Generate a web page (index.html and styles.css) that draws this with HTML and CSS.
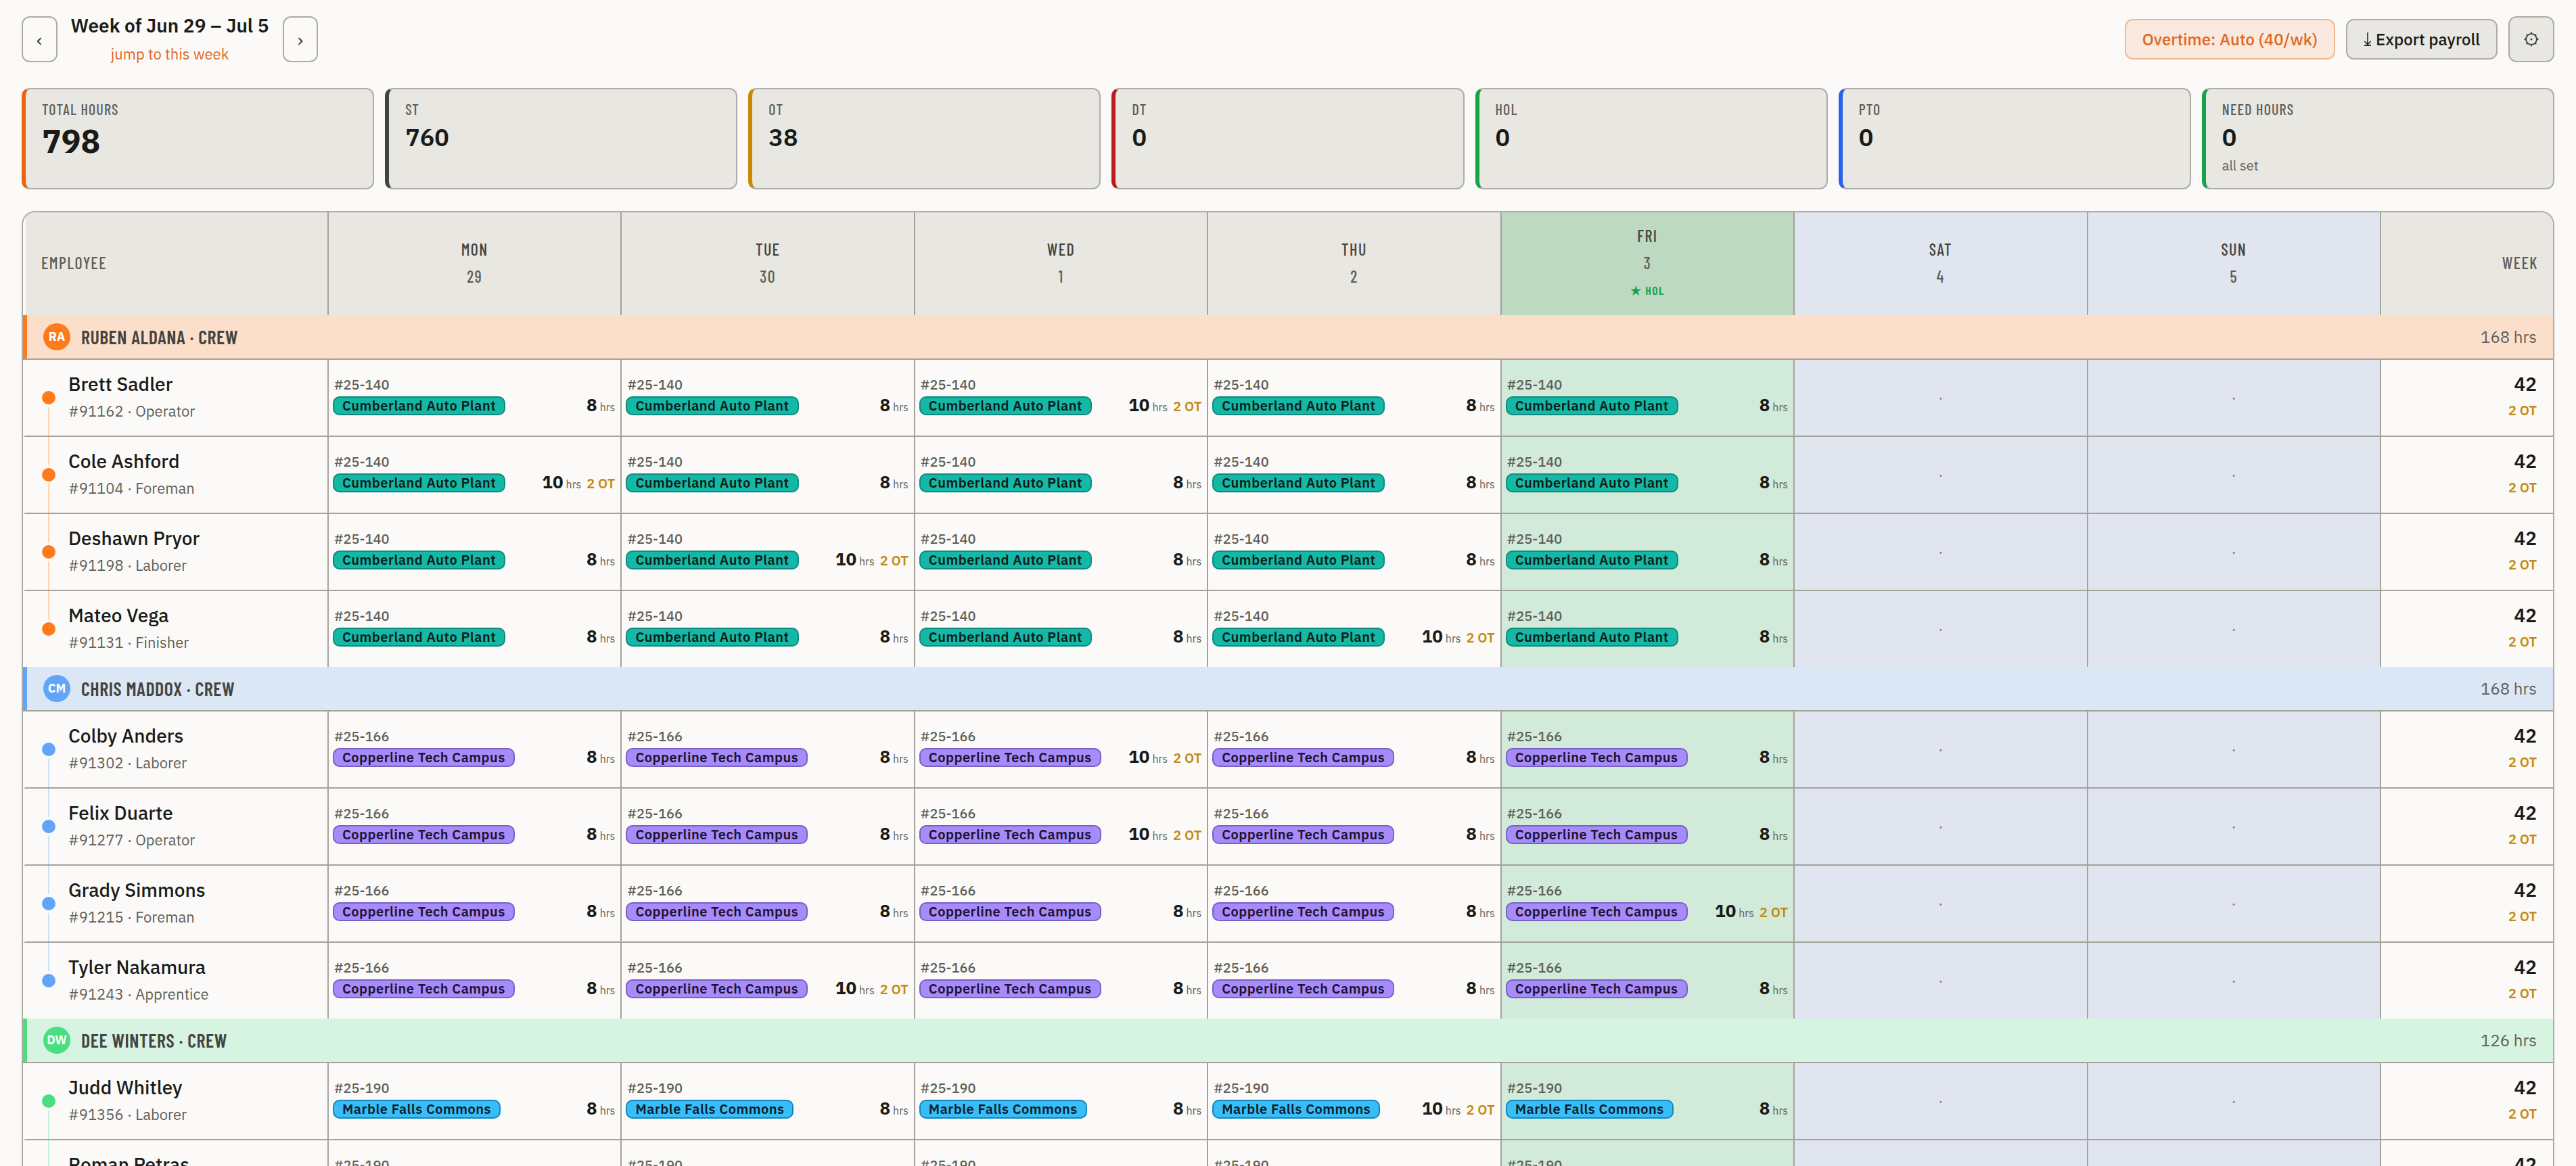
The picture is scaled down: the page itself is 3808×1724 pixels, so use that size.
FILE: index.html
```html
<!DOCTYPE html>
<html lang="en">
<head>
<meta charset="utf-8">
<meta name="viewport" content="width=device-width, initial-scale=1">
<title>Time sheet – Week of Jun 29 – Jul 5</title>
<link rel="stylesheet" href="styles.css">
</head>
<body>
<header class="topbar">
  <div class="week-nav">
    <button class="nav-btn" type="button" aria-label="Previous week">‹</button>
    <div class="week-title">
      <h1>Week of Jun 29 – Jul 5</h1>
      <a href="#">jump to this week</a>
    </div>
    <button class="nav-btn" type="button" aria-label="Next week">›</button>
  </div>
  <div class="actions">
    <button class="btn btn-accent" type="button">Overtime: Auto (40/wk)</button>
    <button class="btn" type="button">
      <svg viewBox="0 0 12 20" width="12" height="20" fill="none" stroke="currentColor" stroke-width="1.500" aria-hidden="true">
        <path d="M6 0v18M1.500 13 6 18l4.500-5M1 19.200h10"/>
      </svg>
      Export payroll
    </button>
    <button class="btn btn-icon" type="button" aria-label="Settings">
      <svg viewBox="0 0 24 24" width="24" height="24" fill="none" stroke="currentColor" stroke-width="2" aria-hidden="true">
        <circle cx="12" cy="12" r="8"/>
        <circle cx="12" cy="12" r="1.500" fill="currentColor" stroke="none"/>
        <path d="M12 4V1.500M12 20v2.500M4 12H1.500M20 12h2.500M6.300 6.300 4.800 4.800M17.700 6.300l1.500-1.500M6.300 17.700l-1.500 1.500M17.700 17.700l1.500 1.500"/>
      </svg>
    </button>
  </div>
</header>

<main>
  <section class="stats" aria-label="Weekly totals">
    <div class="stat stat-total"><span class="stat-label">Total hours</span><strong class="stat-value">798</strong></div>
    <div class="stat stat-st"><span class="stat-label">ST</span><strong class="stat-value">760</strong></div>
    <div class="stat stat-ot"><span class="stat-label">OT</span><strong class="stat-value">38</strong></div>
    <div class="stat stat-dt"><span class="stat-label">DT</span><strong class="stat-value">0</strong></div>
    <div class="stat stat-hol"><span class="stat-label">HOL</span><strong class="stat-value">0</strong></div>
    <div class="stat stat-pto"><span class="stat-label">PTO</span><strong class="stat-value">0</strong></div>
    <div class="stat stat-need"><span class="stat-label">Need hours</span><strong class="stat-value">0</strong><span class="stat-note">all set</span></div>
  </section>

  <div class="sheet">
    <table>
      <colgroup><col class="col-employee"><col><col><col><col><col><col><col><col class="col-week"></colgroup>
      <thead>
        <tr>
          <th class="employee" scope="col">Employee</th>
          <th scope="col"><span class="dow">Mon</span><span>29</span></th>
          <th scope="col"><span class="dow">Tue</span><span>30</span></th>
          <th scope="col"><span class="dow">Wed</span><span>1</span></th>
          <th scope="col"><span class="dow">Thu</span><span>2</span></th>
          <th scope="col" class="holiday"><span class="dow">Fri</span><span>3</span><span class="hol-tag">★ HOL</span></th>
          <th scope="col" class="weekend"><span class="dow">Sat</span><span>4</span></th>
          <th scope="col" class="weekend"><span class="dow">Sun</span><span>5</span></th>
          <th scope="col" class="week">Week</th>
        </tr>
      </thead>
    </table>
  </div>
</main>
<script src="sheet.js"></script>
</body>
</html>
```
FILE: sheet.js
```js
// Crews with their job; the last number of a person is the weekday with a 10-hour shift.
const crews = [
  { key: "orange", initials: "RA", lead: "Ruben Aldana", total: 168, job: "#25-140", site: "Cumberland Auto Plant", tone: "teal",
    people: [["Brett Sadler", "#91162 · Operator", 2], ["Cole Ashford", "#91104 · Foreman", 0], ["Deshawn Pryor", "#91198 · Laborer", 1], ["Mateo Vega", "#91131 · Finisher", 3]] },
  { key: "blue", initials: "CM", lead: "Chris Maddox", total: 168, job: "#25-166", site: "Copperline Tech Campus", tone: "violet",
    people: [["Colby Anders", "#91302 · Laborer", 2], ["Felix Duarte", "#91277 · Operator", 2], ["Grady Simmons", "#91215 · Foreman", 4], ["Tyler Nakamura", "#91243 · Apprentice", 1]] },
  { key: "green", initials: "DW", lead: "Dee Winters", total: 126, job: "#25-190", site: "Marble Falls Commons", tone: "sky",
    people: [["Judd Whitley", "#91356 · Laborer", 3], ["Roman Petras", "#91340 · Operator", 1]] }
];

const dayCell = (crew, day, long) => {
  const over = day === long;
  return `<td class="day${day === 4 ? " holiday" : ""}">
    <span class="job">${crew.job}</span>
    <div class="entry"><span class="site site-${crew.tone}">${crew.site}</span>
    <span class="hours"><b>${over ? 10 : 8}</b><small>hrs</small>${over ? '<em class="ot">2 OT</em>' : ""}</span></div></td>`;
};

const personRow = (crew, [name, info, long]) => `<tr>
  <th class="employee" scope="row"><div class="person"><span class="name">${name}</span><span class="info">${info}</span></div></th>
  ${[0, 1, 2, 3, 4].map(day => dayCell(crew, day, long)).join("")}
  <td class="weekend">·</td><td class="weekend">·</td>
  <td class="week"><span class="sum">42</span><span class="ot">2 OT</span></td></tr>`;

const table = document.querySelector(".sheet table");
for (const crew of crews) {
  const body = document.createElement("tbody");
  body.className = `crew crew-${crew.key}`;
  body.innerHTML = `<tr class="crew-head"><th colspan="9" scope="rowgroup"><div class="crew-bar">
    <span class="avatar">${crew.initials}</span><span class="crew-name">${crew.lead} · Crew</span><span class="crew-total">${crew.total} hrs</span>
    </div></th></tr>` + crew.people.map(p => personRow(crew, p)).join("");
  table.append(body);
}
```
FILE: styles.css
```css
:root {
  --bg: #fbfaf8;
  --panel: #e8e7e2;
  --line: #a3a29b;
  --edge: #adaca7;
  --ink: #1a1b19;
  --ink-2: #44443f;
  --muted: #5f5e57;
  --accent: #e0661c;
  --amber: #c58a11;
  --green: #16a34a;
  --sans: "IBM Plex Sans", "Noto Sans", sans-serif;
  --cond: "Barlow Condensed", "Roboto Condensed", sans-serif;
}

* { box-sizing: border-box; }

body {
  margin: 0;
  padding: 16px 32px 32px;
  background: var(--bg);
  color: var(--ink);
  font-family: var(--sans);
}

button { font: inherit; color: inherit; cursor: pointer; }

/* Top bar */
.topbar,
.week-nav,
.actions { display: flex; align-items: center; }

.topbar { justify-content: space-between; margin-bottom: 30px; }
.week-nav { gap: 20px; }
.actions { gap: 16px; }

.week-title { text-align: center; }

.week-title h1 {
  margin: 0;
  font-size: 28px;
  font-weight: 600;
  line-height: 44px;
}

.week-title a {
  display: block;
  color: var(--accent);
  font-size: 22px;
  line-height: 40px;
  text-decoration: none;
}

.nav-btn {
  height: 68px;
  padding: 0 20px;
  border: 2px solid var(--edge);
  border-radius: 12px;
  background: transparent;
  color: var(--ink-2);
  font-size: 28px;
}

.btn {
  display: flex;
  align-items: center;
  justify-content: center;
  gap: 6px;
  height: 60px;
  padding: 0 24px;
  border: 2px solid var(--edge);
  border-radius: 12px;
  background: var(--panel);
  font-size: 24px;
  font-weight: 500;
}

.btn-accent {
  border-color: #f1b78f;
  background: #fae9de;
  color: var(--accent);
}

.btn-icon {
  width: 68px;
  height: 68px;
  padding: 0;
  color: var(--ink-2);
}

/* Totals */
.stats {
  display: grid;
  grid-template-columns: repeat(7, 1fr);
  gap: 16px;
  margin-bottom: 32px;
}

.stat {
  display: flex;
  flex-direction: column;
  padding: 20px 24px 18px;
  border: 2px solid var(--edge);
  border-left: 6px solid var(--tone);
  border-radius: 12px;
  background: var(--panel);
}

.stat-total { --tone: #ea6310; }
.stat-st { --tone: #44443f; }
.stat-ot { --tone: #ca8a04; }
.stat-dt { --tone: #b91c1c; }
.stat-hol,
.stat-need { --tone: #16a34a; }
.stat-pto { --tone: #2563eb; }

.stat-label {
  margin-bottom: 14px;
  color: var(--muted);
  font-family: var(--cond);
  font-size: 22px;
  font-weight: 500;
  line-height: 18px;
  letter-spacing: .05em;
  text-transform: uppercase;
}

.stat-value { font-size: 36px; font-weight: 600; line-height: 38px; }
.stat-total .stat-value { font-size: 48px; font-weight: 700; line-height: 48px; }
.stat-note { margin-top: 8px; color: var(--muted); font-size: 20px; line-height: 30px; }

/* Time sheet */
.sheet {
  overflow: hidden;
  border: 2px solid var(--edge);
  border-radius: 20px;
}

table {
  width: 100%;
  border-collapse: separate;
  border-spacing: 0;
  table-layout: fixed;
}

.col-employee { width: 452px; }
.col-week { width: 254px; }

th, td { padding: 0; font-weight: 400; }

thead th {
  padding: 15px 0 17px;
  border-right: 2px solid var(--line);
  background: var(--panel);
  color: var(--muted);
  font-family: var(--cond);
  font-size: 24px;
  font-weight: 500;
  line-height: 40px;
  letter-spacing: .06em;
  text-transform: uppercase;
}

thead span { display: block; }
thead .dow { color: var(--ink-2); }
thead .employee { padding-left: 23px; text-align: left; }
thead .week { padding-right: 22px; text-align: right; }
thead .holiday { background: #bdd9c1; }

thead .hol-tag {
  color: var(--green);
  font-size: 18px;
  font-weight: 600;
}

th.employee {
  border-left: 4px solid transparent;
  background-clip: padding-box;
}

th.week, td.week { border-right: 0; }

.weekend { background: #e0e5ef; }
thead .weekend { background: #e0e5ef; }

tbody tr:not(.crew-head) > * {
  border-right: 2px solid var(--line);
  border-bottom: 2px solid var(--line);
}

tbody tr:not(.crew-head) > .week { border-right: 0; }
tbody tr:last-child:not(.crew-head) > * { border-bottom: 0; }

/* Crew band */
.crew-orange { --crew: #ff7a1a; --band: #fcdfcb; }
.crew-blue { --crew: #60a5fa; --band: #dbe7f5; }
.crew-green { --crew: #4ade80; --band: #d7f3e1; }

.crew-head th {
  border-bottom: 2px solid var(--line);
  background: var(--band);
}

.crew-bar {
  display: flex;
  align-items: center;
  gap: 16px;
  padding: 12px 24px;
  border-left: 6px solid var(--crew);
}

.avatar {
  width: 40px;
  border-radius: 50%;
  background: var(--crew);
  color: #fff;
  font-size: 18px;
  font-weight: 700;
  line-height: 40px;
  text-align: center;
}

.crew-name {
  color: var(--ink-2);
  font-family: var(--cond);
  font-size: 28px;
  font-weight: 600;
  letter-spacing: .02em;
  text-transform: uppercase;
}

.crew-total { margin-left: auto; color: var(--muted); font-size: 24px; }

/* Employee column */
.person {
  position: relative;
  padding: 16px 0 16px 63px;
  text-align: left;
}

.person::before {
  content: "";
  position: absolute;
  left: 24px;
  top: 46px;
  z-index: 1;
  width: 20px;
  height: 20px;
  border-radius: 50%;
  background: var(--crew);
}

tr:not(:last-child) .person::after {
  content: "";
  position: absolute;
  left: 33px;
  top: 70px;
  width: 2px;
  height: 86px;
  background: var(--crew);
  opacity: .3;
}

.name { display: block; font-size: 28px; font-weight: 500; line-height: 40px; }
.info { display: block; color: var(--muted); font-size: 22px; line-height: 40px; }

/* Day cells */
.day { padding: 24px 8px 0 6px; vertical-align: top; }
.day.holiday { background: #d1ead9; }

.job {
  display: block;
  margin-bottom: 4px;
  padding-left: 2px;
  color: var(--muted);
  font-size: 20px;
  font-weight: 500;
  line-height: 26px;
}

.entry { display: flex; justify-content: space-between; }

.site {
  padding: 0 12px;
  border: 2px solid var(--tone-edge);
  border-radius: 10px;
  background: var(--tone);
  color: #0e1c19;
  font-size: 20px;
  font-weight: 600;
  line-height: 24px;
  letter-spacing: .025em;
}

.site-teal { --tone: #14b8a6; --tone-edge: #0f8a7c; }
.site-violet { --tone: #a78bfa; --tone-edge: #7860c4; color: #1b1430; }
.site-sky { --tone: #38bdf8; --tone-edge: #0f87bd; color: #0b1f2b; }

.hours { display: flex; align-items: baseline; gap: 4px; line-height: 24px; height: 24px; }
.hours b { font-size: 26px; font-weight: 700; }
.hours small { color: var(--muted); font-size: 16px; }

.ot { color: var(--amber); font-size: 20px; font-style: normal; font-weight: 600; }
.hours .ot { margin-left: 4px; }

td.weekend { color: #85868a; font-size: 24px; text-align: center; }

/* Week totals */
td.week { padding: 16px 24px 0 0; text-align: right; vertical-align: top; }
td.week span { display: block; }
td.week .sum { font-size: 28px; font-weight: 600; line-height: 40px; }
td.week .ot { line-height: 38px; }
```
